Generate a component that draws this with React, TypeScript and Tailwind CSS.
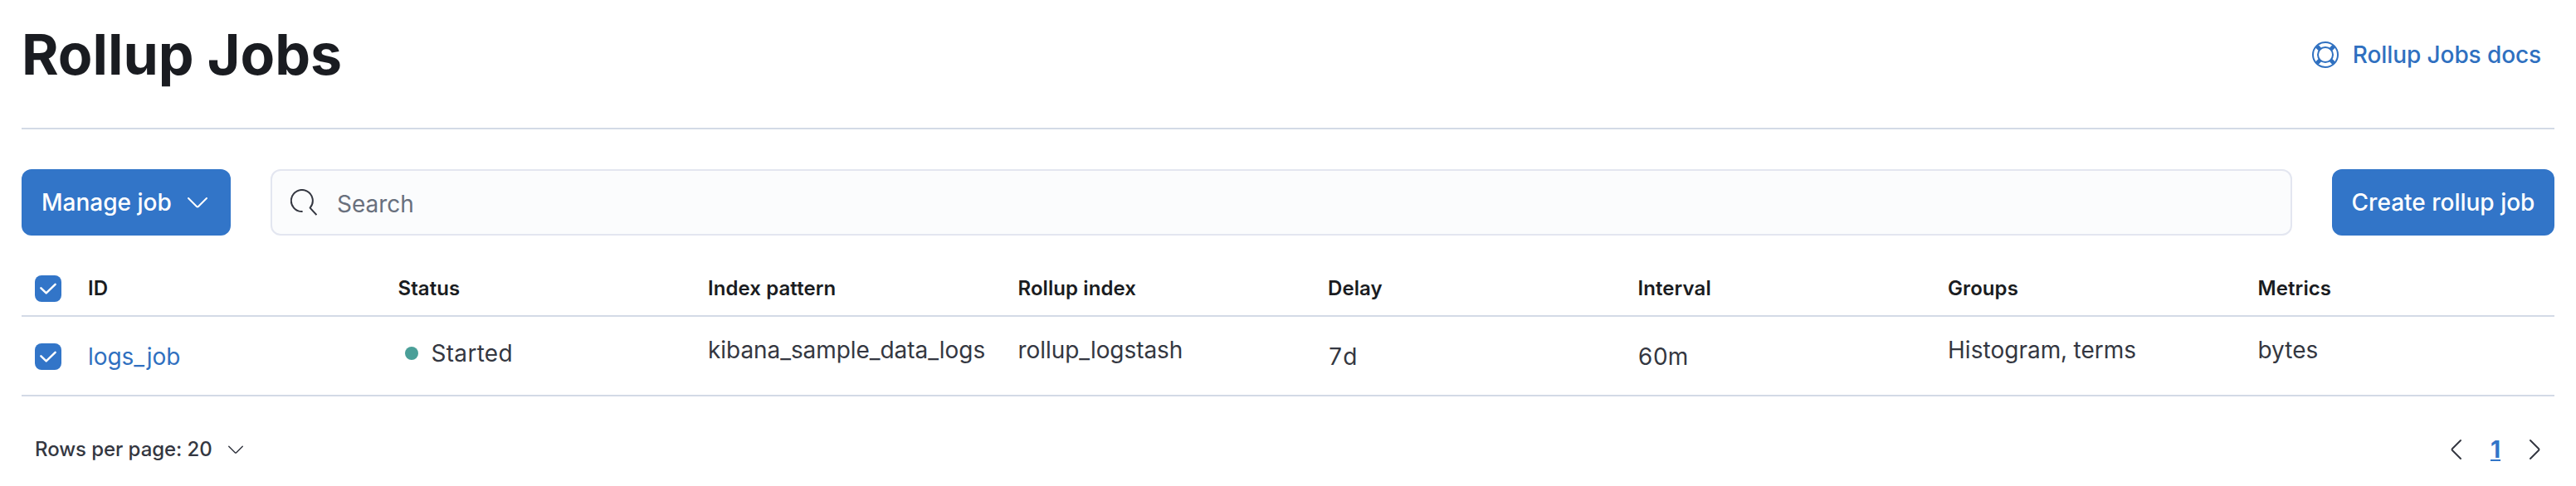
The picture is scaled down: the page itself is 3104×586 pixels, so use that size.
import React from "react";

const columns = ["ID", "Status", "Index pattern", "Rollup index", "Delay", "Interval", "Groups", "Metrics"];

function Chevron({ className, d }: { className: string; d: string }) {
  return (
    <svg viewBox="0 0 16 16" className={className} fill="none" stroke="currentColor" strokeLinecap="round" strokeLinejoin="round">
      <path d={d} />
    </svg>
  );
}

function LifeRing() {
  return (
    <svg viewBox="0 0 16 16" className="size-8" fill="none" stroke="currentColor">
      <circle cx="8" cy="8" r="7.5" />
      <circle cx="8" cy="8" r="4.5" />
      <path strokeWidth="2.4" d="M2.9 2.9l1.9 1.9M13.1 2.9l-1.9 1.9M2.9 13.1l1.9-1.9M13.1 13.1l-1.9-1.9" />
    </svg>
  );
}

function SearchIcon() {
  return (
    <svg viewBox="0 0 16 16" className="size-8 text-[#343741]" fill="none" stroke="currentColor">
      <path strokeLinejoin="round" d="M7.3 13.5A6.5 6.5 0 1 1 11.8 11.3L15.7 15.6" />
    </svg>
  );
}

function Checkbox() {
  return (
    <div role="checkbox" aria-checked="true" className="flex size-8 items-center justify-center rounded-[8px] bg-[#3275c8] text-white">
      <svg viewBox="0 0 20 20" className="size-5" fill="none" stroke="currentColor" strokeWidth="2.5" strokeLinecap="round" strokeLinejoin="round">
        <path d="M1.4 9.3l6.3 6.1L18.6 4.8" />
      </svg>
    </div>
  );
}

export default function App() {
  return (
    <div className="h-[586px] w-full overflow-hidden bg-white px-[26px] font-['Inter',sans-serif] text-[28px] text-[#343741]">
      <header className="flex h-[156px] items-start justify-between border-b-2 border-[#d3dae6] pt-[25px]">
        <h1 className="text-[68px] leading-[80px] font-bold text-[#1a1c21]">Rollup Jobs</h1>
        <a className="mt-px flex h-20 items-center gap-[17px] pr-4 font-medium tracking-[-0.1px] text-[#2f70c0]">
          <LifeRing />
          <span>Rollup Jobs docs</span>
        </a>
      </header>

      <div className="mt-12 flex h-20 gap-12">
        <button className="flex w-[252px] items-center justify-between rounded-[12px] bg-[#3275c8] px-6 font-medium text-white">
          Manage job
          <Chevron className="size-8" d="M2.5 5.5l5 5a.7.7 0 0 0 1 0l5-5" />
        </button>
        <div className="flex flex-1 items-center gap-6 rounded-[12px] border-2 border-[#e3e6f0] bg-[#fbfcfd] px-[22px] text-[#69707d]">
          <SearchIcon />
          <span className="pt-1">Search</span>
        </div>
        <button className="w-[268px] rounded-[12px] bg-[#3275c8] text-center font-medium text-white">Create rollup job</button>
      </div>

      <div className="mt-8 grid h-[66px] grid-cols-[64px_repeat(8,373.5px)] items-center border-b-2 border-[#d3dae6] text-[24px] font-semibold tracking-[0.08px] text-[#1a1c21]">
        <div className="pl-4"><Checkbox /></div>
        {columns.map((c) => (
          <div key={c} className="pl-4">{c}</div>
        ))}
      </div>
      <div className="grid h-24 grid-cols-[64px_repeat(8,373.5px)] items-start border-b-2 border-[#d3dae6] leading-[48px] whitespace-nowrap tabular-nums">
        <div className="pt-8 pl-4"><Checkbox /></div>
        <div className="pt-6 pl-4 tracking-[-0.06px] text-[#2f70c0]">logs_job</div>
        <div className="flex items-center gap-4 pt-5 pl-6">
          <span className="size-4 rounded-full bg-[#4a9f98]" />
          <span className="tracking-[0.3px]">Started</span>
        </div>
        <div className="pt-4 pl-4 tracking-[-0.06px]">kibana_sample_data_logs</div>
        <div className="pt-4 pl-4 tracking-[-0.06px]">rollup_logstash</div>
        <div className="pt-6 pl-4">7d</div>
        <div className="pt-6 pl-4">60m</div>
        <div className="pt-4 pl-4 tracking-[0.04px]">Histogram, terms</div>
        <div className="pt-4 pl-4">bytes</div>
      </div>

      <footer className="mt-8 flex h-16 items-center justify-between pr-2 pl-4">
        <div className="flex items-center gap-4 text-[24px] font-medium tracking-[-0.06px]">
          Rows per page: 20
          <Chevron className="size-6" d="M2.5 5.5l5 5a.7.7 0 0 0 1 0l5-5" />
        </div>
        <div className="flex items-center">
          <Chevron className="size-8" d="M10.5 2.5l-5 5a.7.7 0 0 0 0 1l5 5" />
          <span className="w-[62px] text-center font-bold text-[#3275c8] underline decoration-2 underline-offset-2 [text-decoration-skip-ink:none]">1</span>
          <Chevron className="size-8" d="M5.5 2.5l5 5a.7.7 0 0 1 0 1l-5 5" />
        </div>
      </footer>
    </div>
  );
}
